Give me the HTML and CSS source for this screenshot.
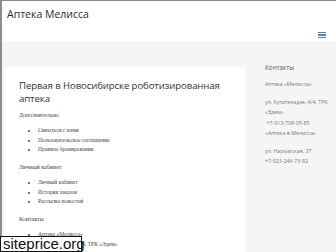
FILE: index.html
```html
<!DOCTYPE html>
<html lang="ru">
<head>
    <meta charset="UTF-8">
    <title>Аптека Мелисса</title>
    <link rel="stylesheet" href="styles.css">
</head>
<body>
    <div class="page">
        <header class="site-header">
            <div class="site-title">Аптека Мелисса</div>
            <button class="menu-toggle" aria-label="Меню">
                <span></span><span></span><span></span>
            </button>
        </header>

        <div class="site-content">
            <main class="content-card">
                <h1 class="entry-title">Первая в Новосибирске роботизированная аптека</h1>

                <div class="widget">
                    <div class="widget-title">Дополнительно</div>
                    <ul>
                        <li>Связаться с нами</li>
                        <li>Пользовательское соглашение</li>
                        <li>Правила бронирования</li>
                    </ul>
                </div>

                <div class="widget">
                    <div class="widget-title">Личный кабинет</div>
                    <ul>
                        <li>Личный кабинет</li>
                        <li>История заказов</li>
                        <li>Рассылка новостей</li>
                    </ul>
                </div>

                <div class="widget">
                    <div class="widget-title">Контакты</div>
                    <ul>
                        <li>Аптека «Мелисса»</li>
                        <li>ул. Кутателадзе, 4/4, ТРК «Эдем»</li>
                    </ul>
                </div>
            </main>

            <aside class="sidebar">
                <div class="sidebar-title">Контакты</div>
                <p>Аптека «Мелисса»</p>
                <p>ул. Кутателадзе, 4/4, ТРК «Эдем»<br>&nbsp;+7-913-708-05-85<br>«Аптека в Мелисса»</p>
                <p>ул. Нарымская, 37<br>+7-923-246-73-82</p>
            </aside>
        </div>

        <div class="watermark">siteprice.org</div>
    </div>
</body>
</html>
```

FILE: styles.css
```css
* {
    box-sizing: border-box;
}

html, body {
    margin: 0;
    height: 100%;
}

body {
    font-family: 'Open Sans', 'Noto Sans', sans-serif;
    background: #f5f5f5;
    overflow: hidden;
}

.page {
    position: relative;
    height: 100%;
    border-top: 1px solid #8c8c8c;
    border-left: 2px solid #8c8c8c;
    display: flex;
    flex-direction: column;
}

/* шапка */
.site-header {
    flex-shrink: 0;
    height: 40px;
    background: #fff;
    display: flex;
    justify-content: space-between;
    padding: 6px 10px 2px 5px;
}

.site-title {
    font-size: 10.5px;
    line-height: 14px;
    color: #2b2b2b;
}

.menu-toggle {
    align-self: flex-end;
    margin-bottom: 1px;
    width: 8px;
    padding: 0;
    border: none;
    background: none;
    display: flex;
    flex-direction: column;
    gap: 1.3px;
}

.menu-toggle span {
    display: block;
    height: 1.2px;
    width: 8px;
    background: #5a7fa8;
}

.site-content {
    flex: 1;
    min-height: 0;
    display: flex;
    padding-left: 3px;
}

/* основная колонка */
.content-card {
    flex-shrink: 0;
    width: 240px;
    margin-top: 26px;
    background: #fff;
    padding: 12px 14px 0;
}

.entry-title {
    margin: 0 0 6px;
    font-size: 9.6px;
    letter-spacing: -0.1px;
    line-height: 13px;
    font-weight: normal;
    color: #333;
}

.widget {
    font-family: 'Liberation Serif', serif;
    color: #444;
    margin-bottom: 8.5px;
}

.widget-title {
    font-size: 6px;
    line-height: 8px;
}

.widget ul {
    margin: 7px 0 0;
    padding-left: 19px;
    font-size: 5.6px;
}

.widget li {
    line-height: 9.5px;
}

/* сайдбар */
.sidebar {
    flex: 1;
    padding: 22px 8px 0 20px;
    color: #7a7a7a;
    font-size: 5.3px;
    line-height: 10.5px;
}

.sidebar-title {
    font-size: 6.3px;
    color: #555;
    line-height: 10px;
    margin-bottom: 6px;
}

.sidebar p {
    margin: 0 0 7px;
}

.watermark {
    position: absolute;
    left: -2px;
    bottom: 0;
    width: 82px;
    height: 16px;
    background: #fff;
    border: 1px solid #111;
    font-family: 'Liberation Sans', sans-serif;
    font-size: 15px;
    line-height: 13px;
    padding-left: 2px;
    color: #111;
    white-space: nowrap;
}
```
